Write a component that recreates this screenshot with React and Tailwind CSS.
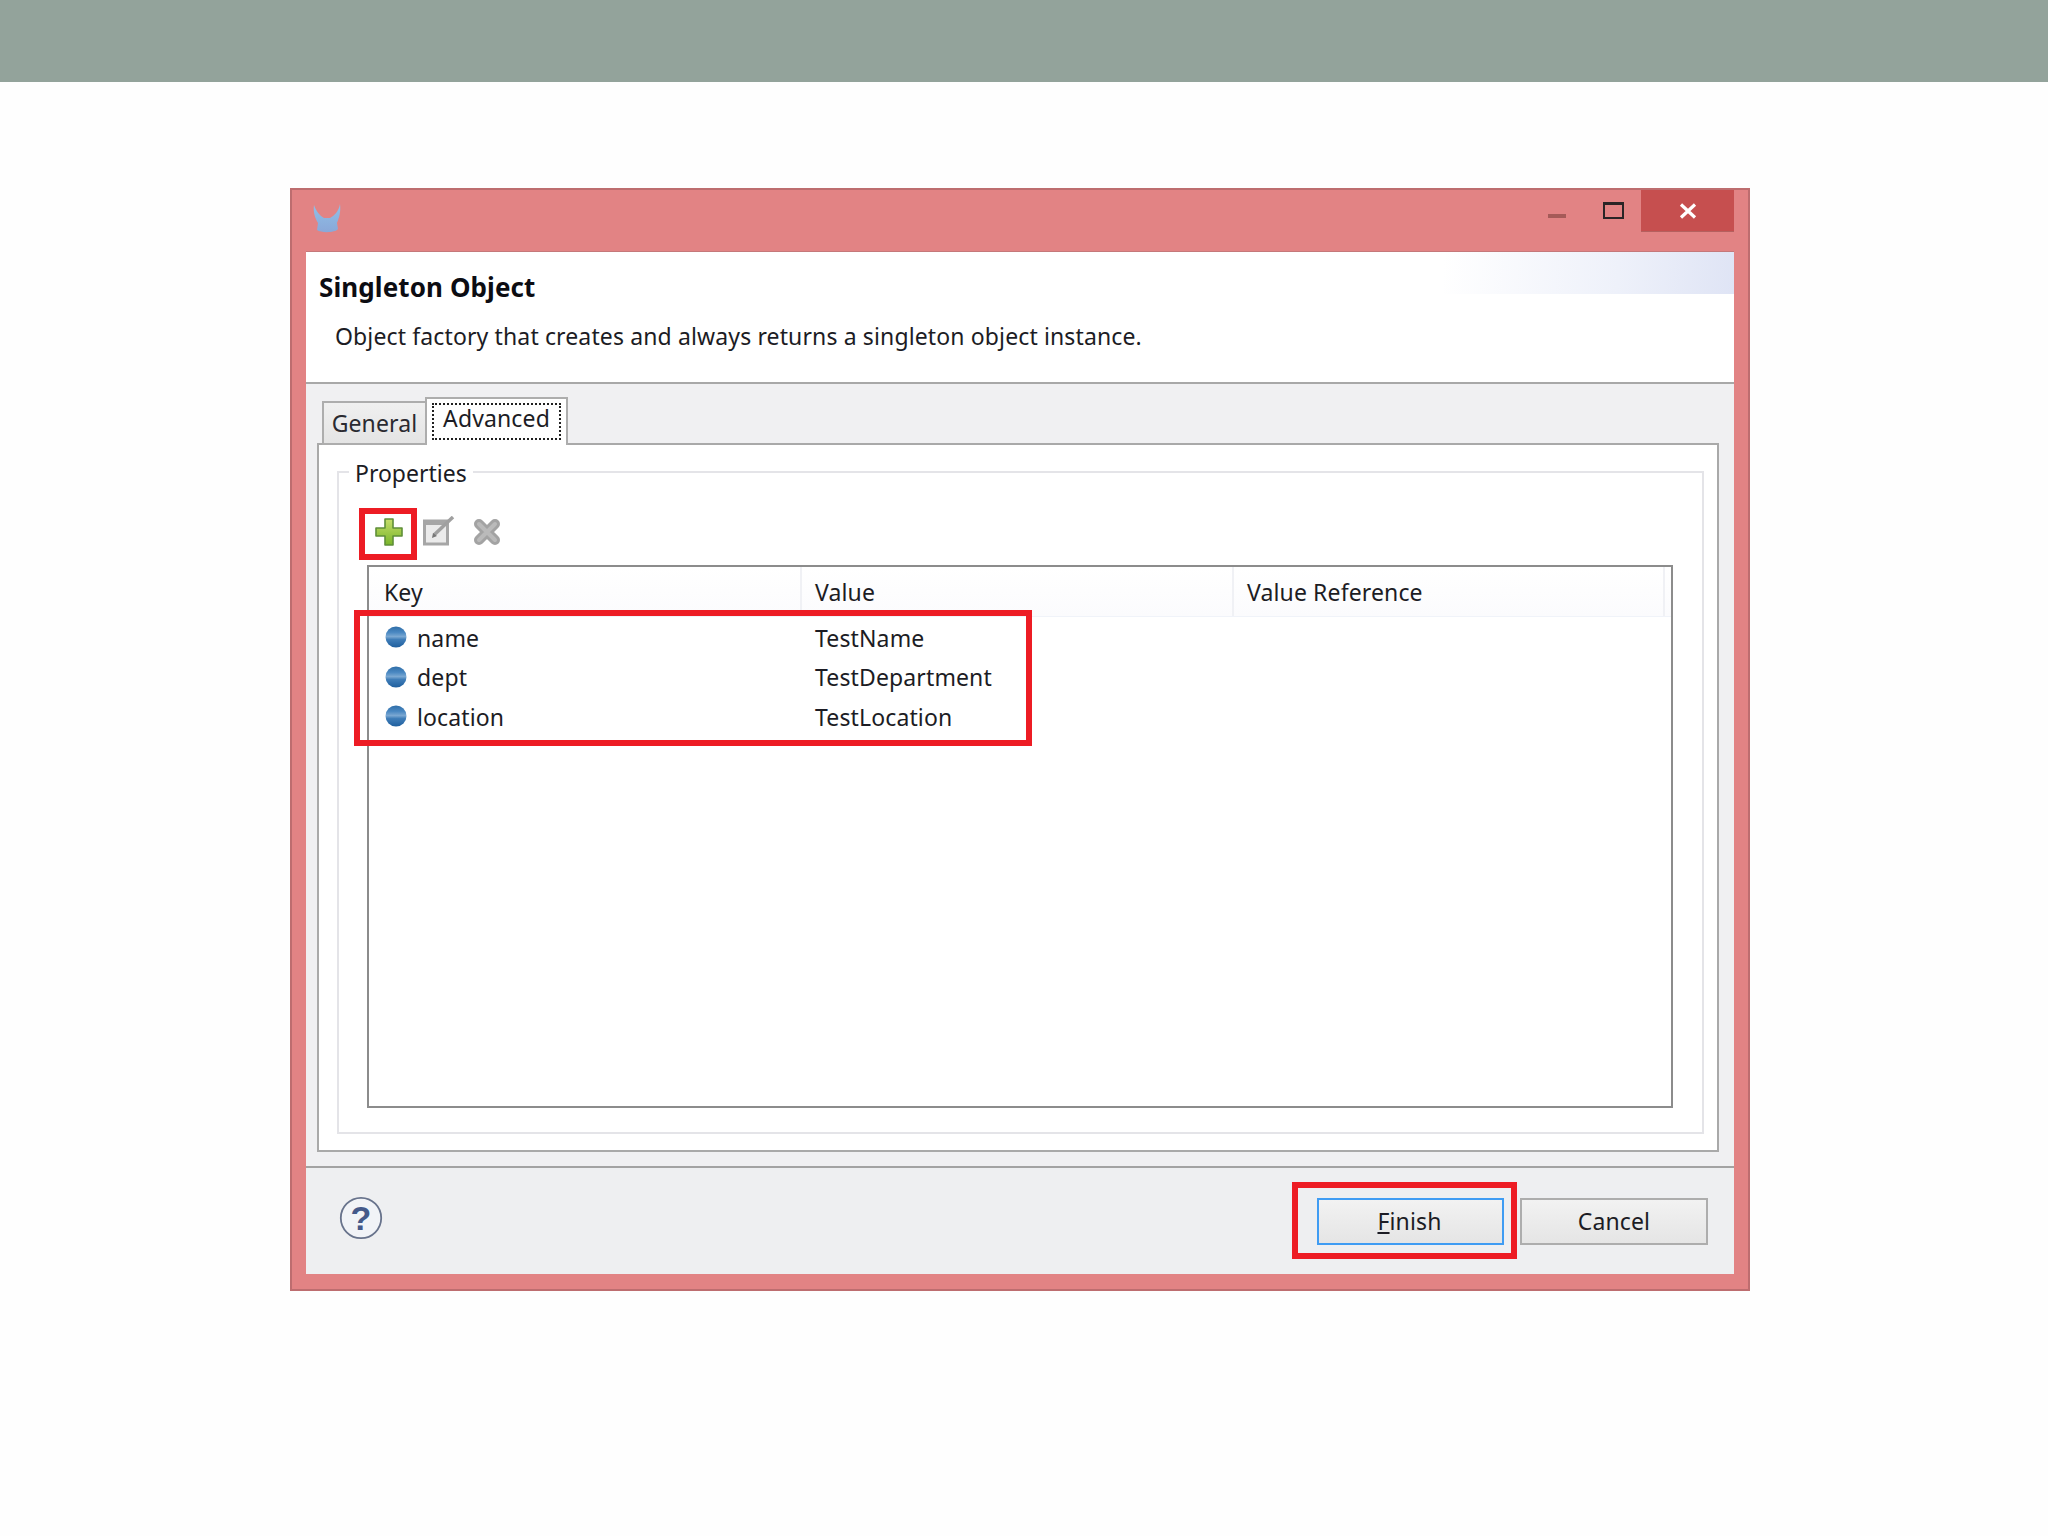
import React from "react";

function Bullet() {
  return (
    <svg width="22" height="22" viewBox="0 0 22 22" className="shrink-0">
      <defs>
        <linearGradient id="bl" x1="0" y1="0" x2="0" y2="1">
          <stop offset="0" stopColor="#2f6ea8" />
          <stop offset="0.28" stopColor="#4a88c2" />
          <stop offset="0.48" stopColor="#7ba8d2" />
          <stop offset="0.62" stopColor="#3f7db8" />
          <stop offset="1" stopColor="#1f5f9e" />
        </linearGradient>
      </defs>
      <circle cx="11" cy="11" r="10.5" fill="url(#bl)" />
    </svg>
  );
}

function AppIcon() {
  return (
    <svg width="28" height="30" viewBox="0 0 28 30">
      <defs>
        <linearGradient id="ai" x1="0" y1="0" x2="0" y2="1">
          <stop offset="0" stopColor="#8fc0e8" />
          <stop offset="1" stopColor="#8aa8d8" />
        </linearGradient>
      </defs>
      <path d="M1 1 C3 7 7 12 11 14 L17 14 C21 12 26 7 27 0 C28 8 26 14 24 19 L25 25 C22 29 8 29 4 26 L5 19 C2 14 0 8 1 1Z" fill="url(#ai)" />
    </svg>
  );
}

function Plus() {
  return (
    <svg width="28" height="28" viewBox="0 0 28 28">
      <defs>
        <linearGradient id="pl" x1="0" y1="0" x2="0" y2="1">
          <stop offset="0" stopColor="#c5de6a" />
          <stop offset="1" stopColor="#79b52a" />
        </linearGradient>
      </defs>
      <path d="M10 1 H18 V10 H27 V18 H18 V27 H10 V18 H1 V10 H10Z" fill="url(#pl)" stroke="#5f8f38" strokeWidth="1.6" strokeLinejoin="round" />
    </svg>
  );
}

function EditIcon() {
  return (
    <svg width="32" height="30" viewBox="0 0 32 30">
      <rect x="1.5" y="5" width="23" height="23" fill="#ebebeb" stroke="#a6a6a6" strokeWidth="3" />
      <rect x="1.5" y="5" width="23" height="4" fill="#a6a6a6" />
      <path d="M11 19 L30 1" stroke="#a0a0a0" strokeWidth="3.5" />
      <path d="M9 22 L10 17 L14 20Z" fill="#777" />
    </svg>
  );
}

function DeleteIcon() {
  return (
    <svg width="28" height="28" viewBox="0 0 28 28">
      <path d="M6 6 L22 22 M22 6 L6 22" stroke="#a3a3a3" strokeWidth="10" strokeLinecap="round" />
      <path d="M6 6 L22 22 M22 6 L6 22" stroke="#bababa" strokeWidth="4" strokeLinecap="round" />
    </svg>
  );
}

function Help() {
  return (
    <svg width="44" height="44" viewBox="0 0 44 44">
      <circle cx="22" cy="22" r="20.2" fill="#f1f3f7" stroke="#68738c" strokeWidth="1.8" />
      <text x="22" y="34" textAnchor="middle" fontFamily="'Liberation Sans', sans-serif" fontWeight="700" fontSize="34" fill="#44598a">?</text>
    </svg>
  );
}

const rows = [
  ["name", "TestName"],
  ["dept", "TestDepartment"],
  ["location", "TestLocation"],
];

export default function App() {
  return (
    <div className="w-[2048px] h-[1536px] bg-[#fefefe] font-['Noto_Sans',sans-serif] text-[23px] tracking-[0.13px] text-[#1c1c24] overflow-hidden">
      <div className="h-[82px] bg-[#93a39b]" />
      <div className="pt-[106px] pl-[290px]">
        <div className="w-[1460px] h-[1103px] bg-[#e28384] border-2 border-[#bd6d6f] flex flex-col pl-[14px] pr-[14px] pb-[15px]">
          {/* title bar */}
          <div className="h-[61px] shrink-0 flex items-start -mr-[14px]">
            <div className="pt-[14px] ml-[7px]"><AppIcon /></div>
            <div className="flex-1" />
            <div className="w-[18px] h-[4px] bg-[#a55a58] mt-[24px]" />
            <div className="w-[21px] h-[17px] border-2 border-t-[3px] border-[#2a2426] mt-[12px] ml-[37px]" />
            <div className="w-[93px] h-[42px] bg-[#c64f4f] border-b border-[#b5605f] ml-[17px] mr-[14px] flex items-center justify-center">
              <svg width="18" height="16" viewBox="0 0 18 16">
                <path d="M2 1.5 L16 14.5 M16 1.5 L2 14.5" stroke="#fff" strokeWidth="3.2" />
              </svg>
            </div>
          </div>
          {/* client */}
          <div className="flex-1 flex flex-col border-t border-[#c5787a]">
            <div className="h-[132px] shrink-0 bg-white border-b-2 border-[#a8a8a8] bg-no-repeat bg-right-top bg-[length:290px_42px] bg-[linear-gradient(95deg,#ffffff_0%,#eef1fa_60%,#dfe4f5_100%)] pl-[13px] pt-[20px]">
              <div className="h-[30px] leading-[30px] font-bold text-[26px] text-[#0c0c12] tracking-[0.1px]">Singleton Object</div>
              <div className="h-[34px] leading-[34px] mt-[17px] ml-[16px]">Object factory that creates and always returns a singleton object instance.</div>
            </div>
            <div className="flex-1 bg-[#f0f0f2] flex flex-col pl-[11px] pr-[15px] pt-[13px]">
              {/* tabs */}
              <div className="h-[46px] flex items-end shrink-0 relative z-10 pl-[5px]">
                <div className="w-[105px] h-[44px] -mb-[2px] border-2 border-[#adadad] bg-gradient-to-b from-[#f0f0f0] to-[#e4e4e4] flex items-center justify-center text-[#2a2a30]">
                  <span>General</span>
                </div>
                <div className="w-[143px] h-[48px] -mb-[2px] -ml-[2px] border-2 border-b-0 border-[#adadad] bg-white px-[5px] pt-[4px]">
                  <div className="h-[37px] border-2 border-dotted border-[#202020] flex items-center justify-center pb-[7px]">
                    <span>Advanced</span>
                  </div>
                </div>
              </div>
              {/* panel */}
              <div className="h-[709px] shrink-0 bg-white border-2 border-[#a9a9a9] pl-[18px] pr-[13px] pt-[26px]">
                <div className="relative h-[663px] border-2 border-[#e4e4e8] pl-[28px] pr-[29px]">
                  <span className="absolute left-[10px] -top-[15px] px-[6px] bg-white leading-[30px] tracking-[0px]">Properties</span>
                  {/* toolbar */}
                  <div className="h-[92px] flex items-start pt-[45px] gap-[9px] pl-[8px]">
                    <Plus />
                    <div className="ml-[11px] -mt-[2px]"><EditIcon /></div>
                    <div className="ml-[9px]"><DeleteIcon /></div>
                  </div>
                  {/* table */}
                  <div className="relative h-[543px] border-2 border-[#8c8c8c] bg-white">
                    <div className="h-[50px] border-b border-[#f0f3f9] flex bg-gradient-to-b from-[#ffffff] to-[#fbfbfd]">
                      <div className="w-[433px] border-r-2 border-[#f0f1f5] pl-[15px] leading-[50px]">Key</div>
                      <div className="w-[432px] border-r-2 border-[#f0f1f5] pl-[13px] leading-[50px]">Value</div>
                      <div className="w-[431px] border-r-2 border-[#f0f1f5] pl-[13px] leading-[50px]">Value Reference</div>
                    </div>
                    <div className="pt-[1px]">
                      {rows.map(([k, v]) => (
                        <div key={k} className="h-[39.5px] flex items-center">
                          <div className="w-[433px] pl-[16px] flex items-center gap-[10px]">
                            <span className="-mt-[1px] flex"><Bullet /></span>
                            <span>{k}</span>
                          </div>
                          <div className="pl-[13px]">{v}</div>
                        </div>
                      ))}
                    </div>
                    {/* annotation: rows */}
                    <div className="absolute -left-[15px] top-[43px] w-[678px] h-[136px] border-[6px] border-[#ed1c24]" />
                    {/* annotation: add */}
                    <div className="absolute -left-[10px] -top-[59px] w-[58px] h-[52px] border-[6px] border-[#ed1c24]" />
                  </div>
                </div>
              </div>
              <div className="flex-1" />
            </div>
            {/* footer */}
            <div className="h-[108px] shrink-0 bg-[#eeeff1] border-t-2 border-[#a3a3a3] flex items-start pl-[33px] pr-[26px] pt-[28px]">
              <Help />
              <div className="flex-1" />
              <div className="relative mt-[2px] w-[187px] h-[47px] border-2 border-[#3f9cf3] bg-gradient-to-b from-[#f2f2f2] to-[#e5e5e5] flex items-center justify-center">
                <span className="pr-[2px]"><u className="underline-offset-2">F</u>inish</span>
                <div className="absolute -left-[27px] -top-[18px] w-[225px] h-[77px] border-[6px] border-[#ed1c24]" />
              </div>
              <div className="ml-[16px] mt-[2px] w-[188px] h-[47px] border-2 border-[#adadad] bg-gradient-to-b from-[#f2f2f2] to-[#e5e5e5] flex items-center justify-center">
                <span>Cancel</span>
              </div>
            </div>
          </div>
        </div>
      </div>
    </div>
  );
}
